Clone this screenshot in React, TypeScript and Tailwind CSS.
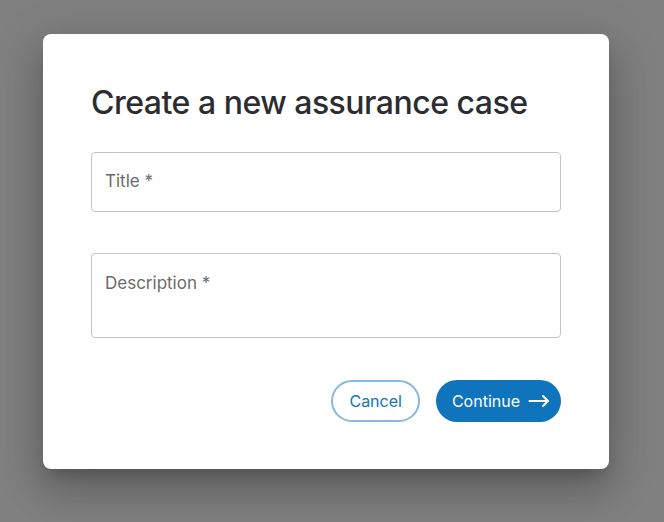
function ArrowIcon() {
  return (
    <svg width="22" height="14" viewBox="0 0 22 14" fill="none" stroke="currentColor" strokeWidth="2" strokeLinecap="round" strokeLinejoin="round">
      <path d="M1.5 7H20" />
      <path d="M15 2L20 7L15 12" />
    </svg>
  );
}

function App() {
  return (
    <div
      className="w-[664px] h-[522px] bg-[#808080] flex items-start pl-[43px] pt-[34px]"
      style={{ fontFamily: "Inter, 'Noto Sans', sans-serif" }}
    >
      <div className="w-[566px] h-[435px] bg-white rounded-lg shadow-[0_11px_15px_-7px_rgba(0,0,0,0.2),0_24px_38px_3px_rgba(0,0,0,0.14),0_9px_46px_8px_rgba(0,0,0,0.12)] px-12 pt-[50px]">
        <h1 className="text-[32px] leading-[38px] font-medium text-[#2b2d31] tracking-[-0.5px]">
          Create a new assurance case
        </h1>
        <div className="mt-[30px] h-[60px] border border-[#c4c4c4] rounded flex items-center px-[13px]">
          <span className="text-[17px] text-[#6b6b6b]">Title *</span>
        </div>
        <div className="mt-[41px] h-[85px] border border-[#c4c4c4] rounded px-[13px] pt-[17px]">
          <span className="text-[17px] text-[#6b6b6b]">Description *</span>
        </div>
        <div className="mt-[42px] flex justify-end gap-4">
          <button className="h-[42px] px-4 rounded-full border-2 border-[#86b8df] text-[#0f74bb] text-[16px]">
            Cancel
          </button>
          <button className="h-[42px] pl-4 pr-[11px] rounded-full bg-[#0f74bb] text-white text-[16px] flex items-center gap-2">
            Continue
            <ArrowIcon />
          </button>
        </div>
      </div>
    </div>
  );
}

export default App;
